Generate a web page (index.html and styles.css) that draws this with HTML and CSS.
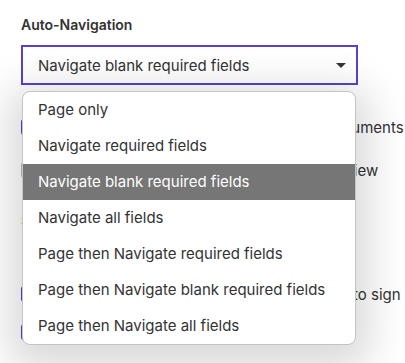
FILE: index.html
```html
<!DOCTYPE html>
<html>
  <head>
    <title>Auto-Navigation</title>
    <link rel="stylesheet" href="styles.css">
  </head>
  <body>
    <div class="settings">
      <label class="field-label">Auto-Navigation</label>
      <div class="select-wrap">
        <div class="select-box">
          <span>Navigate blank required fields</span>
          <span class="caret"></span>
        </div>

        <ul class="menu">
          <li>Page only</li>
          <li>Navigate required fields</li>
          <li class="active">Navigate blank required fields</li>
          <li>Navigate all fields</li>
          <li>Page then Navigate required fields</li>
          <li>Page then Navigate blank required fields</li>
          <li>Page then Navigate all fields</li>
        </ul>
      </div>

      <div class="options">
        <div class="option first"><span class="check on"></span><span>Requires signers to review and sign all documents</span></div>
        <div class="option second"><span class="check off"></span><span>Open every document in a new pane to review</span></div>
        <div class="section-title">Signing</div>
        <div class="option third"><span class="check on"></span><span>Allow recipients to mark which documents to sign</span></div>
        <div class="option fourth"><span class="check on"></span><span>Confirm before finishing</span></div>
      </div>
    </div>
  </body>
</html>
```

FILE: styles.css
```css
html,
body {
  margin: 0;
  min-height: 100vh;
  overflow: hidden;
}
body {
  font-family: Inter, "Liberation Sans", sans-serif;
  color: #333;
  background: #fff;
}
.settings {
  padding: 16px 48px 0 21px;
}
.field-label {
  display: block;
  font-size: 14px;
  font-weight: 600;
  line-height: 18px;
  color: #333;
}
.select-wrap {
  position: relative;
  margin-top: 11px;
}
.select-box {
  display: flex;
  align-items: center;
  justify-content: space-between;
  box-sizing: border-box;
  width: 337px;
  height: 40px;
  padding: 0 10px 0 15px;
  border: 2px solid #5b3fd1;
  font-size: 15px;
}
.caret {
  width: 0;
  height: 0;
  border-left: 5px solid transparent;
  border-right: 5px solid transparent;
  border-top: 5px solid #333;
}
.menu {
  position: absolute;
  top: 46px;
  left: 1px;
  width: 334px;
  margin: 0;
  padding: 0;
  list-style: none;
  box-sizing: border-box;
  background: #fff;
  border: 1px solid #c4c4c4;
  border-radius: 8px;
  box-shadow: 0 10px 40px 14px rgba(0, 0, 0, 0.15);
  overflow: hidden;
  z-index: 2;
}
.menu li {
  height: 36px;
  line-height: 36px;
  padding-left: 15px;
  font-size: 15px;
  white-space: nowrap;
}
.menu li.active {
  background: #767676;
  color: #fff;
}
.options {
  display: flex;
  flex-direction: column;
  padding-top: 32px;
}
.option {
  display: flex;
  align-items: center;
  gap: 12px;
  height: 20px;
  font-size: 15px;
  white-space: nowrap;
}
.second {
  margin-top: 23px;
}
.third {
  margin-top: 54px;
}
.fourth {
  margin-top: 18px;
}
.check {
  box-sizing: border-box;
  width: 16px;
  height: 16px;
  border: 2px solid #333;
  border-radius: 3px;
  flex: none;
}
.check.on {
  border-color: #5b3fd1;
  background: #5b3fd1;
}
.check.off {
  border-color: #bbb;
}
.section-title {
  margin-top: 32px;
  font-size: 15px;
  font-weight: 600;
  line-height: 18px;
}
```
